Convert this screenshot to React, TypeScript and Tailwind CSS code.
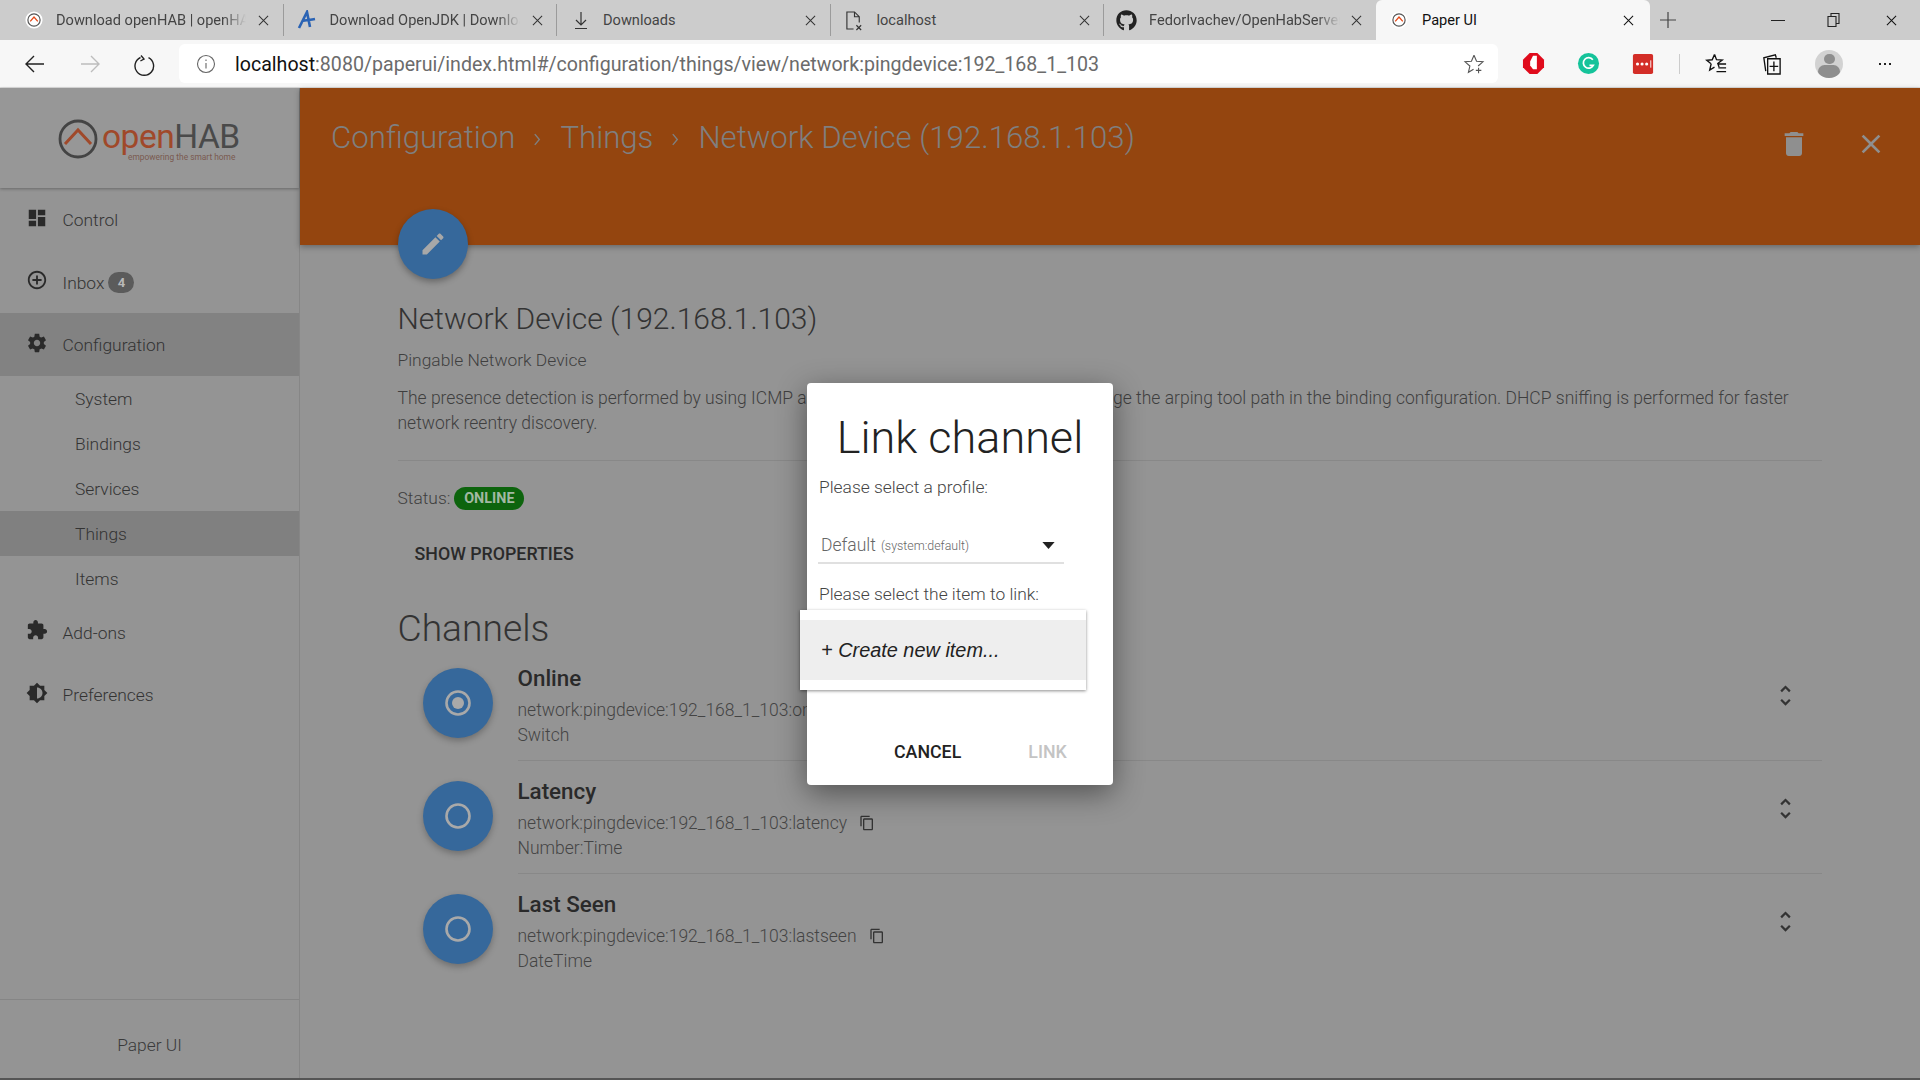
import React from "react";
import { FaGithub } from "react-icons/fa";

const P = {
  dash: "M3 13h8V3H3v10zm0 8h8v-6H3v6zm10 0h8V11h-8v10zm0-18v6h8V3h-8z",
  add: "M13 7h-2v4H7v2h4v4h2v-4h4v-2h-4V7zm-1-5C6.48 2 2 6.48 2 12s4.48 10 10 10 10-4.48 10-10S17.52 2 12 2zm0 18c-4.41 0-8-3.59-8-8s3.59-8 8-8 8 3.59 8 8-3.59 8-8 8z",
  gear: "M19.43 12.98c.04-.32.07-.64.07-.98s-.03-.66-.07-.98l2.11-1.65c.19-.15.24-.42.12-.64l-2-3.46c-.12-.22-.39-.3-.61-.22l-2.49 1c-.52-.4-1.08-.73-1.69-.98l-.38-2.65C14.46 2.18 14.25 2 14 2h-4c-.25 0-.46.18-.49.42l-.38 2.65c-.61.25-1.17.59-1.69.98l-2.49-1c-.23-.09-.49 0-.61.22l-2 3.46c-.13.22-.07.49.12.64l2.11 1.65c-.04.32-.07.65-.07.98s.03.66.07.98l-2.11 1.65c-.19.15-.24.42-.12.64l2 3.46c.12.22.39.3.61.22l2.49-1c.52.4 1.08.73 1.69.98l.38 2.65c.03.24.24.42.49.42h4c.25 0 .46-.18.49-.42l.38-2.65c.61-.25 1.17-.59 1.69-.98l2.49 1c.23.09.49 0 .61-.22l2-3.46c.12-.22.07-.49-.12-.64l-2.11-1.65zM12 15.5c-1.93 0-3.5-1.57-3.5-3.5s1.57-3.5 3.5-3.5 3.5 1.57 3.5 3.5-1.57 3.5-3.5 3.5z",
  ext: "M20.5 11H19V7c0-1.1-.9-2-2-2h-4V3.5C13 2.12 11.88 1 10.5 1S8 2.12 8 3.5V5H4c-1.1 0-1.99.9-1.99 2v3.8H3.5c1.49 0 2.7 1.21 2.7 2.7s-1.21 2.7-2.7 2.7H2V20c0 1.1.9 2 2 2h3.8v-1.5c0-1.49 1.21-2.7 2.7-2.7 1.49 0 2.7 1.21 2.7 2.7V22H17c1.1 0 2-.9 2-2v-4h1.5c1.38 0 2.5-1.12 2.5-2.5S21.88 11 20.5 11z",
  pref: "M20 15.31L23.31 12 20 8.69V4h-4.69L12 .69 8.69 4H4v4.69L.69 12 4 15.31V20h4.69L12 23.31 15.31 20H20v-4.69zM12 18V6c3.31 0 6 2.69 6 6s-2.69 6-6 6z",
  edit: "M3 17.25V21h3.75L17.81 9.94l-3.75-3.75L3 17.25zM20.71 7.04c.39-.39.39-1.02 0-1.41l-2.34-2.34c-.39-.39-1.02-.39-1.41 0l-1.83 1.83 3.75 3.75 1.83-1.83z",
  trash: "M6 19c0 1.1.9 2 2 2h8c1.1 0 2-.9 2-2V7H6v12zM19 4h-3.5l-1-1h-5l-1 1H5v2h14V4z",
  close: "M19 6.41L17.59 5 12 10.59 6.41 5 5 6.41 10.59 12 5 17.59 6.41 19 12 13.41 17.59 19 19 17.59 13.41 12z",
  copy: "M16 1H4c-1.1 0-2 .9-2 2v14h2V3h12V1zm3 4H8c-1.1 0-2 .9-2 2v14c0 1.1.9 2 2 2h11c1.1 0 2-.9 2-2V7c0-1.1-.9-2-2-2zm0 16H8V7h11v14z",
  unfold: "M12 5.83L15.17 9l1.41-1.41L12 3 7.41 7.59 8.83 9 12 5.83zm0 12.34L8.83 15l-1.41 1.41L12 21l4.59-4.59L15.17 15 12 18.17z",
};

function M({ d, className }: { d: string; className: string }) {
  return (
    <svg viewBox="0 0 24 24" className={className} fill="currentColor">
      <path d={d} />
    </svg>
  );
}

function OhFav() {
  return (
    <svg viewBox="0 0 20 20" className="w-[18px] h-[18px]">
      <circle cx="10" cy="10" r="9.5" fill="#fff" />
      <circle cx="10" cy="10" r="6.8" fill="none" stroke="#555" strokeWidth="1.3" />
      <path d="M5.8 11.5L10 6.8l4.2 4.7" fill="none" stroke="#e64a19" strokeWidth="1.5" />
    </svg>
  );
}

function X({ dark }: { dark?: boolean }) {
  return (
    <svg viewBox="0 0 12 12" className="w-[11px] h-[11px]" stroke={dark ? "#111" : "#333"} strokeWidth="1.1" fill="none">
      <path d="M1 1l10 10M11 1L1 11" />
    </svg>
  );
}

function Tab({ icon, title, fade = true }: { icon: React.ReactNode; title: string; fade?: boolean }) {
  return (
    <div className="w-[273.5px] h-[32px] flex items-center border-r border-[#9b9b9b] shrink-0">
      <div className="w-[46px] flex justify-center pl-[1px] shrink-0">{icon}</div>
      <div className={`w-[190px] overflow-hidden whitespace-nowrap text-[14.6px] pt-[1px] text-[#444] ${fade ? "[mask-image:linear-gradient(to_right,black_88%,transparent)]" : ""}`}>{title}</div>
      <div className="ml-[12px]"><X /></div>
    </div>
  );
}

function NavRow({ d, label, active, badge }: { d: string; label: string; active?: boolean; badge?: string }) {
  return (
    <div className={`h-[62.5px] flex items-center pl-[26px] ${active ? "bg-[#828282]" : ""}`}>
      <M d={d} className="w-[22px] h-[22px] text-[#2a2a2a] -mt-[3px]" />
      <span className="ml-[14.5px] pt-[2px] text-[17.4px] font-light text-[#333]">{label}</span>
      {badge && (
        <span className="ml-[4px] w-[26px] h-[21px] rounded-full bg-[#5b5b5b] text-[#b8b8b8] text-[13px] font-bold flex items-center justify-center mt-[2px]">{badge}</span>
      )}
    </div>
  );
}

function SubRow({ label, active }: { label: string; active?: boolean }) {
  return (
    <div className={`h-[45px] flex items-center pl-[75px] pt-[2px] text-[17.4px] font-light text-[#333] ${active ? "bg-[#808080]" : ""}`}>{label}</div>
  );
}

function Channel({ name, id, type, selected, copy, last }: { name: string; id: string; type: string; selected?: boolean; copy?: boolean; last?: boolean }) {
  return (
    <div className="h-[113px] flex">
      <div className="w-[70px] ml-[26px] mr-[25px] pt-[17px] shrink-0">
        <div className="w-[70px] h-[70px] rounded-full bg-[#36689b] shadow-[0_3px_6px_rgba(0,0,0,0.25)] flex items-center justify-center">
          <svg viewBox="0 0 26 26" className="w-[26px] h-[26px]" fill="none" stroke="#a9a9a9" strokeWidth="2.6">
            <circle cx="13" cy="13" r="11.5" />
            {selected && <circle cx="13" cy="13" r="6" fill="#a9a9a9" stroke="none" />}
          </svg>
        </div>
      </div>
      <div className={`flex-1 flex self-start h-[110px] ${last ? "" : "border-b border-[#888888]"}`}>
        <div className="flex-1 pt-[13px]">
          <div className="text-[22.4px] font-medium text-[#2a2a2a] leading-[28px] h-[33.5px]">{name}</div>
          <div className="flex items-center text-[17.5px] text-[#444] leading-[25px] font-light">
            <span>{id}</span>
            {copy && <M d={P.copy} className="w-[16px] h-[16px] ml-[12px] -mt-[1px] text-[#333]" />}
          </div>
          <div className="text-[17.5px] text-[#444] leading-[25px] font-light">{type}</div>
        </div>
        <div className="w-[50px] pt-[31px] shrink-0">
          <M d={P.unfold} className="w-[27px] h-[27px] text-[#333]" />
        </div>
      </div>
    </div>
  );
}

export default function App() {
  return (
    <div className="relative w-[1920px] h-[1080px] overflow-hidden flex flex-col bg-[#949494] [font-family:Roboto,sans-serif]">
      {/* Tab strip */}
      <div className="h-[40px] shrink-0 bg-[#cccccc] flex items-center pl-[10px]">
        <Tab icon={<OhFav />} title="Download openHAB | openHAB" />
        <Tab
          icon={
            <svg viewBox="0 0 20 20" className="w-[20px] h-[20px]">
              <path d="M2 18L10 2l3 15M5 11c4-1 8-1 13-2" fill="none" stroke="#2a63b4" strokeWidth="2.6" />
            </svg>
          }
          title="Download OpenJDK | Downloads"
        />
        <Tab
          icon={
            <svg viewBox="0 0 20 20" className="w-[20px] h-[20px]" fill="none" stroke="#333" strokeWidth="1.2">
              <path d="M10 2v12M5 10l5 5 5-5M4 18.5h12" />
            </svg>
          }
          title="Downloads"
          fade={false}
        />
        <Tab
          icon={
            <svg viewBox="0 0 20 22" className="w-[19px] h-[21px]" fill="none" stroke="#333" strokeWidth="1.2">
              <path d="M9 20H2V2h8l5 5v6M10 2v5h5M12 16l5 5M17 16l-5 5" />
            </svg>
          }
          title="localhost"
          fade={false}
        />
        <div className="w-[272px] h-[32px] flex items-center shrink-0">
          <div className="w-[45px] flex justify-center shrink-0"><FaGithub className="w-[21px] h-[21px] text-[#222]" /></div>
          <div className="w-[191px] overflow-hidden whitespace-nowrap text-[14.6px] pt-[1px] text-[#444] [mask-image:linear-gradient(to_right,black_88%,transparent)]">FedorIvachev/OpenHabServer</div>
          <div className="ml-[11px]"><X /></div>
        </div>
        <div className="w-[274px] h-[40px] self-end bg-[#f7f7f7] rounded-t-[6px] flex items-center shrink-0">
          <div className="w-[46px] flex justify-center shrink-0"><OhFav /></div>
          <div className="w-[191px] text-[14.6px] pt-[1px] text-[#111]">Paper UI</div>
          <div className="ml-[10px]"><X dark /></div>
        </div>
        <svg viewBox="0 0 18 18" className="w-[18px] h-[18px] ml-[9px]" stroke="#444" strokeWidth="1.2" fill="none"><path d="M9 1v16M1 9h16" /></svg>
        <div className="ml-auto flex items-center">
          <div className="w-[14px] h-[1px] bg-[#222] mr-[42px]" />
          <svg viewBox="0 0 14 16" className="w-[14px] h-[16px] mr-[45px]" fill="none" stroke="#222" strokeWidth="1.1"><path d="M1 4.5h8v10H1zM4 4.5V1.5h8v10H9" /></svg>
          <div className="mr-[23px]"><X dark /></div>
        </div>
      </div>

      {/* Toolbar */}
      <div className="h-[48px] shrink-0 bg-[#f7f7f7] flex items-center border-b-[1px] border-[#dddddd]">
        <svg viewBox="0 0 24 24" className="w-[24px] h-[24px] ml-[23px]" fill="none" stroke="#222" strokeWidth="1.4"><path d="M21 12H3M11 4l-8 8 8 8" /></svg>
        <svg viewBox="0 0 24 24" className="w-[24px] h-[24px] ml-[31px]" fill="none" stroke="#bdbdbd" strokeWidth="1.4"><path d="M3 12h18M13 4l8 8-8 8" /></svg>
        <svg viewBox="0 0 24 24" className="w-[24px] h-[24px] ml-[31px]" fill="none" stroke="#222" strokeWidth="1.4"><path d="M8 3.5l3 3.5-3.6 2M7.5 5.5a9.3 9.3 0 1 0 8 .2" /></svg>
        <div className="ml-[22px] w-[1319px] h-[39px] bg-white rounded-[6px] flex items-center">
          <svg viewBox="0 0 20 20" className="w-[20px] h-[20px] ml-[17px]" fill="none" stroke="#666" strokeWidth="1.1"><circle cx="10" cy="10" r="8.5" /><path d="M10 9v5.5M10 5.5v1.6" /></svg>
          <div className="ml-[19px] pt-[2px] text-[19.6px] whitespace-nowrap text-[#6b6b6b] flex-1"><span className="text-[#111]">localhost</span>:8080/paperui/index.html#/configuration/things/view/network:pingdevice:192_168_1_103</div>
          <svg viewBox="0 0 24 24" className="w-[22px] h-[22px] mr-[13px]" fill="none" stroke="#555" strokeWidth="1.2"><path d="M12 2.5l2.8 6.5 7 .6-5.3 4.6M12 2.5L9.2 9l-7 .6 5.3 4.6-1.6 6.9 5.6-3.4M17 16v6M14 19h6" /></svg>
        </div>
        <svg viewBox="0 0 24 24" className="w-[23px] h-[25px] ml-[24px]"><path d="M8 1h8l7 7v8l-7 7H8l-7-7V8z" fill="#e00b1c" /><path d="M8.5 10l3-6h4v14h-4l-3-4z" fill="#fff" /></svg>
        <svg viewBox="0 0 24 24" className="w-[23px] h-[23px] ml-[32px]"><circle cx="12" cy="12" r="11" fill="#15c39a" /><path d="M16.5 8a5.5 5.5 0 1 0 .5 6h-4" fill="none" stroke="#fff" strokeWidth="1.8" /></svg>
        <svg viewBox="0 0 24 24" className="w-[22px] h-[22px] ml-[32px]"><rect x="1" y="1" width="22" height="22" rx="2" fill="#d32d27" /><circle cx="6" cy="12" r="1.7" fill="#fff" /><circle cx="11" cy="12" r="1.7" fill="#fff" /><circle cx="16" cy="12" r="1.7" fill="#fff" /><path d="M20.5 8v8" stroke="#fff" /></svg>
        <div className="w-[1px] h-[20px] bg-[#cccccc] ml-[25px]" />
        <svg viewBox="0 0 24 24" className="w-[23px] h-[23px] ml-[25px]" fill="none" stroke="#111" strokeWidth="1.4"><path d="M10 2.5l2 5.5 6 .4-4.7 3.6 1.4 3.6M6 12L1.8 8.6l5.7-.5L10 2.5M6.5 12l-1.6 6.8 5-3M14 12.5h8M14 16.5h8M12 20.5h10" /></svg>
        <svg viewBox="0 0 24 24" className="w-[23px] h-[25px] ml-[32px]" fill="none" stroke="#111" strokeWidth="1.4"><path d="M6 20L4 6l12-3 1 3M8 7h13v16H8zM14.5 10v10M10 15h9" /></svg>
        <div className="ml-[32px] w-[28px] h-[28px] rounded-full bg-[#d2d2d2] overflow-hidden flex flex-col items-center">
          <div className="w-[11px] h-[13px] rounded-full bg-[#8e8e8e] mt-[4px]" />
          <div className="w-[22px] h-[16px] rounded-full bg-[#8e8e8e] mt-[1px]" />
        </div>
        <div className="ml-[36px] flex gap-[3px]">
          <div className="w-[2px] h-[2px] bg-[#222]" />
          <div className="w-[2px] h-[2px] bg-[#222]" />
          <div className="w-[2px] h-[2px] bg-[#222]" />
        </div>
      </div>

      {/* Page, dimmed by the open dialog */}
      <div className="flex-1 flex relative min-h-0 text-[#3a3a3a]">
        <aside className="w-[300px] shrink-0 border-r border-[#868686] flex flex-col bg-[#949494]">
          <div className="h-[100px] shrink-0 bg-[#979797] shadow-[0_1px_3px_rgba(0,0,0,0.3)] flex items-center pl-[58px] relative">
            <svg viewBox="0 0 40 40" className="w-[40px] h-[40px] shrink-0 mt-[2px]">
              <circle cx="20" cy="20" r="18" fill="none" stroke="#444" strokeWidth="2.8" />
              <path d="M7 25L20 11l13 14" fill="none" stroke="#a0492a" strokeWidth="3" />
            </svg>
            <div className="ml-[4px] mt-[8px]">
              <div className="text-[33.5px] text-[#a0492a] tracking-[-0.5px] leading-[30px] font-normal">open<span className="text-[#4a4a4a]">HAB</span></div>
              <div className="text-[8.4px] leading-[10px] text-[#7a5a50] pl-[26px] whitespace-nowrap">empowering the smart home</div>
            </div>
          </div>
          <NavRow d={P.dash} label="Control" />
          <NavRow d={P.add} label="Inbox" badge="4" />
          <NavRow d={P.gear} label="Configuration" active />
          <SubRow label="System" />
          <SubRow label="Bindings" />
          <SubRow label="Services" />
          <SubRow label="Things" active />
          <SubRow label="Items" />
          <NavRow d={P.ext} label="Add-ons" />
          <NavRow d={P.pref} label="Preferences" />
          <div className="mt-auto h-[81px] border-t border-[#858585] flex items-center justify-center pt-[10px] text-[17.4px] text-[#3a3a3a] font-light">Paper UI</div>
        </aside>

        <main className="flex-1 min-w-0 relative">
          <header className="h-[157px] bg-[#94450f] shadow-[0_2px_6px_rgba(0,0,0,0.3)] flex items-start text-[#7f7f7f] pl-[31px]">
            <div className="flex items-center h-[48px] mt-[26px] text-[31.2px] font-light leading-none whitespace-nowrap">
              <span>Configuration</span>
              <svg viewBox="0 0 10 14" className="w-[9px] h-[13px] mx-[18px] mt-[3px]" fill="none" stroke="#7f7f7f" strokeWidth="1.6"><path d="M2 1l5 6-5 6" /></svg>
              <span>Things</span>
              <svg viewBox="0 0 10 14" className="w-[9px] h-[13px] mx-[18px] mt-[3px]" fill="none" stroke="#7f7f7f" strokeWidth="1.6"><path d="M2 1l5 6-5 6" /></svg>
              <span>Network Device (192.168.1.103)</span>
            </div>
            <div className="ml-auto flex items-center mt-[40px] text-[#8f8f8f]">
              <M d={P.trash} className="w-[32px] h-[32px]" />
              <M d={P.close} className="w-[32px] h-[32px] ml-[45px] mr-[33px]" />
            </div>
          </header>

          <div className="absolute left-[98px] top-[121px] w-[70px] h-[70px] rounded-full bg-[#36689b] shadow-[0_3px_6px_rgba(0,0,0,0.3)] flex items-center justify-center">
            <M d={P.edit} className="w-[28px] h-[28px] text-[#a8a8a8]" />
          </div>

          <div className="pl-[97.5px] pr-[98px] pt-[52px]">
            <h1 className="text-[30px] font-light leading-[44px] text-[#333] whitespace-nowrap">Network Device (192.168.1.103)</h1>
            <div className="text-[17.4px] font-light leading-[25px] mt-[6.5px] text-[#3f3f3f]">Pingable Network Device</div>
            <p className="text-[17.5px] font-light leading-[25px] mt-[13px] text-[#3f3f3f]">
              The presence detection is performed by using ICMP and, if available, ARP pings. You can change the arping tool path in the binding configuration. DHCP sniffing is performed for faster network reentry discovery.
            </p>
            <div className="border-t border-[#888888] mt-[24px]" />
            <div className="flex items-center mt-[26px] h-[24px] text-[17.4px] font-light text-[#3f3f3f]">
              <span>Status:</span>
              <span className="ml-[4px] w-[70px] h-[23px] rounded-full bg-[#0d640d] text-[#a2b8a2] text-[14.4px] font-bold flex items-center justify-center">ONLINE</span>
            </div>
            <div className="mt-[31px] ml-[17px] text-[17.8px] font-medium leading-[24px] text-[#2a2a2a]">SHOW PROPERTIES</div>
            <h2 className="text-[37.2px] font-light leading-[48px] text-[#333] mt-[38.5px]">Channels</h2>
            <div className="-mt-[1px] -ml-[1px]">
              <Channel name="Online" id="network:pingdevice:192_168_1_103:online" type="Switch" selected copy />
              <Channel name="Latency" id="network:pingdevice:192_168_1_103:latency" type="Number:Time" copy />
              <Channel name="Last Seen" id="network:pingdevice:192_168_1_103:lastseen" type="DateTime" copy last />
            </div>
          </div>
        </main>

        {/* Bottom edge */}
        <div className="absolute left-0 right-0 bottom-0 h-[2px] bg-[#555555]" />
      </div>

      {/* Dialog */}
      <div className="absolute left-[807px] top-[383px] w-[306px] h-[402px] bg-white rounded-[4px] shadow-[0_8px_30px_rgba(0,0,0,0.45)] px-[12px] text-[#555] flex flex-col">
        <div className="text-[45px] font-light text-[#222] text-center leading-[54px] mt-[28px] whitespace-nowrap -mx-[12px]">Link channel</div>
        <div className="text-[17.4px] font-light leading-[24px] mt-[10px] text-[#444]">Please select a profile:</div>
        <div className="mt-[30px] w-[246px] h-[35px] border-b-2 border-[#e0e0e0] flex items-center pl-[3px] -ml-[1px] text-[#666] font-light">
          <span className="text-[17.5px]">Default</span>
          <span className="text-[12.4px] ml-[5px] mt-[2px]">(system:default)</span>
          <svg viewBox="0 0 14 8" className="w-[13px] h-[7px] ml-auto mr-[9px]"><path d="M0 0h14L7 8z" fill="#222" /></svg>
        </div>
        <div className="text-[17.4px] font-light leading-[24px] mt-[18px] text-[#444] whitespace-nowrap">Please select the item to link:</div>
        <div className="mt-auto mb-[19px] flex items-center text-[17.8px] font-medium">
          <span className="ml-[75px] text-[#222]">CANCEL</span>
          <span className="ml-[67px] text-[#c4c4c4]">LINK</span>
        </div>
      </div>

      {/* Item suggestions menu */}
      <div className="absolute left-[800px] top-[610px] w-[286px] h-[80px] bg-white shadow-[0_1px_3px_rgba(0,0,0,0.45)] py-[10px]">
        <div className="h-[60px] bg-[#eeeeee] flex items-center pl-[21px] pt-[1px] text-[19.9px] italic text-[#222] [font-family:'Liberation_Sans',sans-serif]">+ Create new item...</div>
      </div>
    </div>
  );
}
